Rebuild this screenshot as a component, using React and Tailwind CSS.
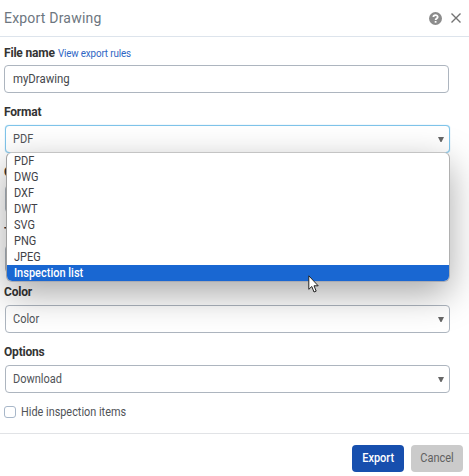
const formats = ["PDF", "DWG", "DXF", "DWT", "SVG", "PNG", "JPEG", "Inspection list"];

function Arrow() {
  return (
    <svg className="h-[5px] w-[6px]" viewBox="0 0 6 5" fill="#666">
      <path d="M0 0h6L3.5 5h-1z" />
    </svg>
  );
}

function Label({ children }) {
  return (
    <span className="origin-left scale-x-[0.96] text-[12.5px] leading-4 font-bold tracking-[-0.2px] whitespace-nowrap text-[#333]">{children}</span>
  );
}

function Select({ label, value, focused, children }) {
  return (
    <div className="relative flex h-[60px] flex-col">
      <div className="-mt-px flex h-[21px] items-start">
        <Label>{label}</Label>
      </div>
      <div
        className={`ml-px flex h-7 w-[445px] items-center justify-between rounded-[4px] border bg-white pr-[5px] pl-[7px] text-[12.5px] text-[#505357] ${
          focused ? "border-[#7fc4ea] shadow-[0_0_1px_#7fc4ea]" : "border-[#adb5bf]"
        }`}
      >
        <span className="origin-left scale-x-[0.88]">{value}</span>
        <Arrow />
      </div>
      {children}
    </div>
  );
}

function FormatMenu() {
  return (
    <div className="absolute top-[47px] left-[2px] z-10 w-[444px] overflow-hidden rounded-[6px] border border-t-[#c4c4c4] border-r-[#b0b0b0] border-b-[#a9abb3] border-l-[#a0a0a0] bg-white shadow-[0_12px_36px_rgba(0,0,0,0.34)]">
      {formats.map((f) => (
        <div
          key={f}
          className={`flex h-4 items-center pl-[6.5px] text-[12.5px] leading-4 ${
            f === "Inspection list" ? "bg-[#1967d2] font-medium text-white" : "text-[#3f4145]"
          }`}
        >
          <span className="origin-left scale-x-[0.88] whitespace-nowrap">{f}</span>
        </div>
      ))}
    </div>
  );
}

export default function App() {
  return (
    <div className="relative flex h-[476px] w-[469px] flex-col overflow-hidden bg-white font-['Roboto','Liberation_Sans',sans-serif]">
      <header className="flex h-[37px] items-center justify-between border-b border-[#dde4ec] pr-[8px] pl-1">
        <h1 className="text-[14px] leading-5 tracking-[0.2px] text-[#6d7680]">Export Drawing</h1>
        <div className="flex items-center gap-[9px]">
          <svg className="mt-px h-[13px] w-[13px]" viewBox="0 0 13 13">
            <circle cx="6.5" cy="6.5" r="6.5" fill="#8c8c8c" />
            <path d="M4.4 5.1C4.4 2.5 8.7 2.5 8.7 5C8.7 6.5 6.6 6.3 6.6 8" fill="none" stroke="#fff" strokeWidth="1.8" />
            <path d="M5.7 9h1.8v1.7H5.7z" fill="#fff" />
          </svg>
          <svg className="h-[10px] w-[10px]" viewBox="0 0 10 10" stroke="#737373" strokeWidth="1.4">
            <path d="M0.5 0.5l9 9M9.5 0.5l-9 9" />
          </svg>
        </div>
      </header>

      <main className="flex h-[396px] flex-col pt-2 pl-1">
        <div className="flex h-[60px] flex-col">
          <div className="flex h-[20px] items-start">
            <Label>File name</Label>
            <a className="origin-left scale-x-[0.89] pl-px text-[11px] leading-[18px] tracking-[-0.15px] whitespace-nowrap text-[#2e66c4]">View export rules</a>
          </div>
          <div className="flex h-7 w-[445px] items-center rounded-[4px] border border-[#adb5bf] pl-2 text-[12.5px] text-[#45484c]">
            <span className="origin-left scale-x-[0.91]">myDrawing</span>
          </div>
        </div>
        <Select label="Format" value="PDF" focused>
          <FormatMenu />
        </Select>
        <Select label="C" value="" />
        <Select label="T" value="" />
        <Select label="Color" value="Color" />
        <Select label="Options" value="Download" />
        <label className="flex h-[14px] items-center gap-[5px] text-[12.5px] text-[#505357]">
          <span className="h-[12px] w-[12px] rounded-[3px] border border-[#a8b7c9] bg-white" />
          <span className="origin-left scale-x-[0.87] whitespace-nowrap">Hide inspection items</span>
        </label>
      </main>

      <footer className="flex h-[43px] items-start justify-end gap-[7px] border-t border-[#e1e3e6] pt-[11px] pr-[6px]">
        <button className="flex h-[27px] w-[52px] items-center justify-center rounded-[4px] bg-[#174fae] text-[12.5px] font-medium text-white">
          <span className="scale-x-[0.88]">Export</span>
        </button>
        <button className="flex h-[27px] w-[52px] items-center justify-center rounded-[4px] bg-[#cbcbcb] text-[12.5px] text-[#606060]">
          <span className="scale-x-[0.88]">Cancel</span>
        </button>
      </footer>

      <svg className="absolute top-[275px] left-[308px] z-20 h-[19px] w-[12px]" viewBox="0 0 12 19">
        <path d="M0.8 0.8V14.3L3.8 11.5L6 17L8.2 16.1L6 10.8H10.2z" fill="#fff" stroke="#222" strokeWidth="1" />
      </svg>
    </div>
  );
}
